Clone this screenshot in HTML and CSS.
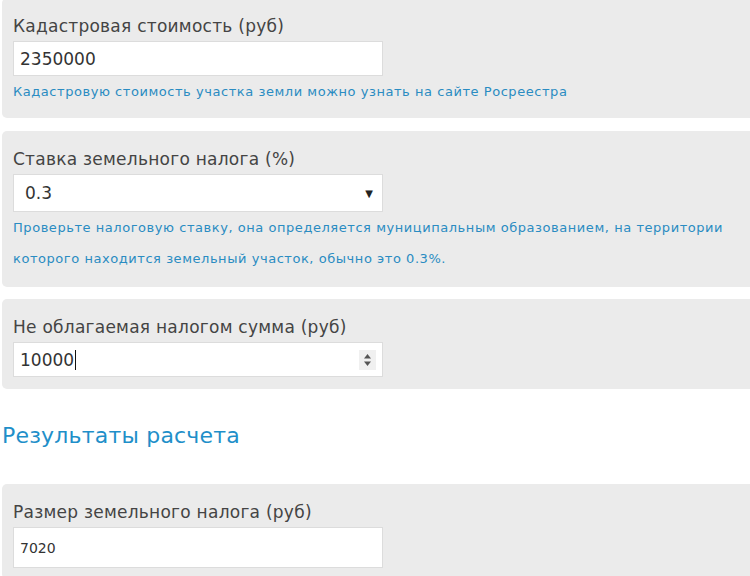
FILE: index.html
```html
<!DOCTYPE html>
<html lang="ru">
<head>
<meta charset="utf-8">
<title>Земельный налог</title>
<link rel="stylesheet" href="styles.css">
</head>
<body>
<div class="page">
  <section class="panel panel-first">
    <div class="label">Кадастровая стоимость (руб)</div>
    <div class="field"><span class="value">2350000</span></div>
    <p class="help">Кадастровую стоимость участка земли можно узнать на сайте Росреестра</p>
  </section>

  <section class="panel panel-rate">
    <div class="label">Ставка земельного налога (%)</div>
    <div class="field field-select"><span class="value value-select">0.3</span><span class="arrow">▼</span></div>
    <p class="help help-wrap">Проверьте налоговую ставку, она определяется муниципальным образованием, на территории которого находится земельный участок, обычно это 0.3%.</p>
  </section>

  <section class="panel panel-free">
    <div class="label">Не облагаемая налогом сумма (руб)</div>
    <div class="field field-number"><span class="value">10000<span class="caret"></span></span>
      <span class="spin"><svg width="9" height="14" viewBox="0 0 9 14"><path d="M4.5 1 L8 5.5 H1 Z" fill="#555"/><path d="M4.5 13 L8 8.5 H1 Z" fill="#555"/></svg></span>
    </div>
  </section>

  <h2 class="results">Результаты расчета</h2>

  <section class="panel">
    <div class="label">Размер земельного налога (руб)</div>
    <div class="field field-result"><span class="value value-small">7020</span></div>
  </section>
</div>
</body>
</html>
```

FILE: styles.css
```css
html, body {
  margin: 0;
  padding: 0;
  background: #ffffff;
  overflow: hidden;
}

body {
  font-family: "DejaVu Sans", Verdana, sans-serif;
  color: #444;
}

.page {
  padding-left: 2px;
  width: 800px;
}

.panel {
  background: #ebebeb;
  border-radius: 5px;
  padding: 17px 11px 11px 11px;
  margin-bottom: 13px;
}

.panel-first {
  margin-top: -2px;
}

.panel-rate {
  padding-bottom: 13px;
  margin-bottom: 12px;
}

.panel-free {
  padding-bottom: 12px;
}

.label {
  font-size: 17px;
  line-height: 22px;
  letter-spacing: 0.25px;
  color: #444;
  margin-bottom: 4px;
}

.field {
  box-sizing: border-box;
  width: 370px;
  height: 35px;
  background: #fff;
  border: 1px solid #dcdcdc;
  display: flex;
  align-items: center;
  justify-content: space-between;
  padding: 0 6px;
}

.value {
  font-size: 17px;
  color: #333;
  display: flex;
  align-items: center;
}

.value-select {
  padding-left: 5px;
}

.field-select {
  height: 38px;
}

.arrow {
  font-size: 10px;
  color: #222;
  padding-right: 3px;
}

.caret {
  display: inline-block;
  width: 1px;
  height: 20px;
  background: #111;
  margin-left: 1px;
}

.spin {
  width: 17px;
  height: 20px;
  background: #f0f0f0;
  display: flex;
  align-items: center;
  justify-content: center;
}

.help {
  margin: 0;
  font-size: 13px;
  line-height: 31px;
  letter-spacing: 0.55px;
  color: #2a8cc2;
}

.help-wrap {
  max-width: 730px;
}

.results {
  margin: 33px 0 34px 0;
  font-size: 22px;
  font-weight: normal;
  letter-spacing: 0.2px;
  color: #1f8fc9;
  line-height: 28px;
}

.field-result {
  height: 41px;
}

.value-small {
  font-size: 14px;
}
```
